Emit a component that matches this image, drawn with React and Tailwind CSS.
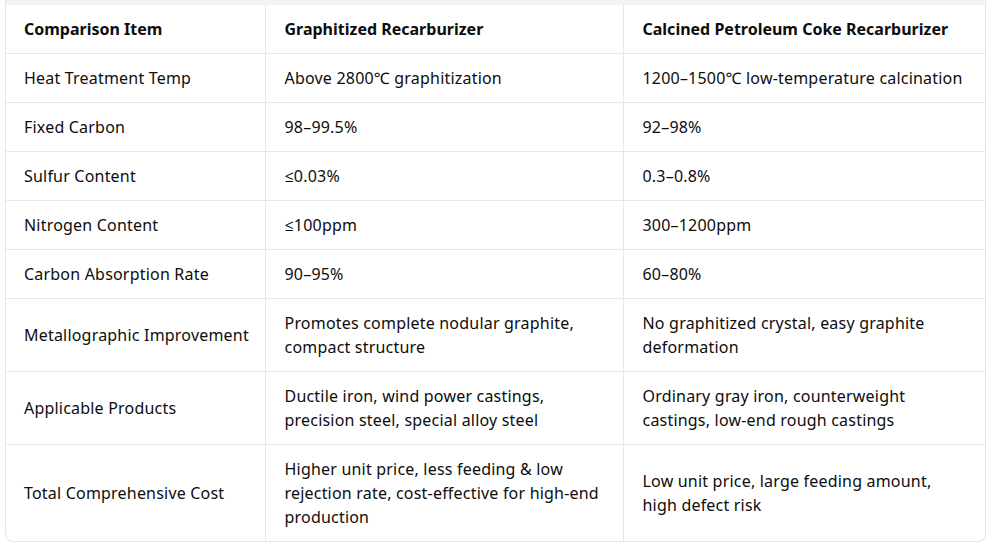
const rows = [
  ['Heat Treatment Temp', 'Above 2800℃ graphitization', '1200–1500℃ low-temperature calcination'],
  ['Fixed Carbon', '98–99.5%', '92–98%'],
  ['Sulfur Content', '≤0.03%', '0.3–0.8%'],
  ['Nitrogen Content', '≤100ppm', '300–1200ppm'],
  ['Carbon Absorption Rate', '90–95%', '60–80%'],
  ['Metallographic Improvement', 'Promotes complete nodular graphite, compact structure', 'No graphitized crystal, easy graphite deformation'],
  ['Applicable Products', 'Ductile iron, wind power castings, precision steel, special alloy steel', 'Ordinary gray iron, counterweight castings, low-end rough castings'],
  ['Total Comprehensive Cost', 'Higher unit price, less feeding & low rejection rate, cost-effective for high-end production', 'Low unit price, large feeding amount, high defect risk'],
]

export default function App() {
  return (
    <div className="bg-white px-[5px] h-[547px] text-[#0d0d0d] text-[16px] leading-6 tracking-[0.2px]" style={{ fontFamily: '"Noto Sans", "Open Sans", sans-serif' }}>
      <div className="w-[981px] border-x border-b border-[#e6e7ea] rounded-b-lg overflow-hidden">
        <div className="h-[5px] bg-[#f3f4f6]"></div>
        <table className="w-full table-fixed border-collapse">
          <colgroup>
            <col className="w-[259px]" />
            <col className="w-[358px]" />
            <col />
          </colgroup>
          <thead>
            <tr className="border-b border-[#e6e7ea]">
              <th className="h-[48px] px-[18px] text-left font-bold align-middle tracking-normal">Comparison Item</th>
              <th className="px-[19px] text-left font-bold border-l border-[#e6e7ea] tracking-normal">Graphitized Recarburizer</th>
              <th className="px-[19px] text-left font-bold border-l border-[#e6e7ea] tracking-normal">Calcined Petroleum Coke Recarburizer</th>
            </tr>
          </thead>
          <tbody>
            {rows.map((r, i) => (
              <tr key={r[0]} className={i < rows.length - 1 ? 'border-b border-[#e6e7ea]' : ''}>
                <td className="py-3 pl-[18px] pr-2 h-[48px] align-middle whitespace-nowrap">{r[0]}</td>
                <td className="py-3 px-[19px] align-middle border-l border-[#e6e7ea]">{r[1]}</td>
                <td className="py-3 px-[19px] align-middle border-l border-[#e6e7ea]">{r[2]}</td>
              </tr>
            ))}
          </tbody>
        </table>
      </div>
    </div>
  )
}
